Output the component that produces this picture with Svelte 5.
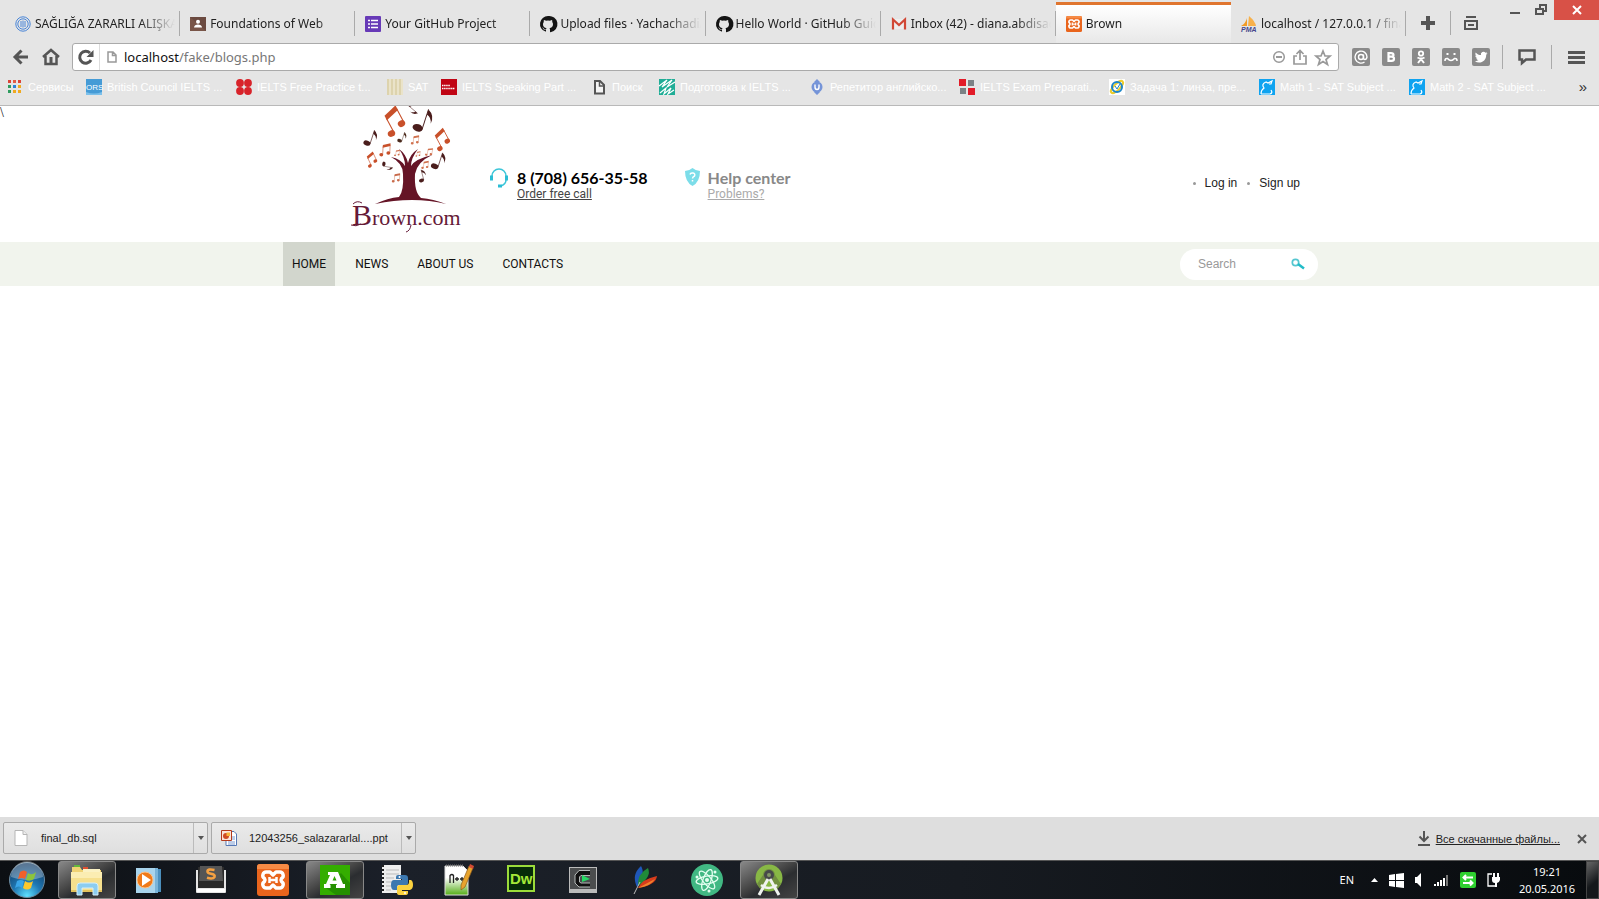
<script>
  const tabs = [
    { icon: 'spiral', title: 'SAĞLIĞA ZARARLI ALIŞKA' },
    { icon: 'class', title: 'Foundations of Web' },
    { icon: 'form', title: 'Your GitHub Project' },
    { icon: 'github', title: 'Upload files · Yachachadi/' },
    { icon: 'github', title: 'Hello World · GitHub Guid' },
    { icon: 'gmail', title: 'Inbox (42) - diana.abdisad' },
    { icon: 'xampp', title: 'Brown', active: true },
    { icon: 'pma', title: 'localhost / 127.0.0.1 / fina' }
  ];
  const bookmarks = [
    { icon: 'apps', title: 'Сервисы', w: 79 },
    { icon: 'ors', title: 'British Council IELTS ...', w: 150 },
    { icon: 'dots', title: 'IELTS Free Practice t...', w: 151 },
    { icon: 'sat', title: 'SAT', w: 54 },
    { icon: 'ielts', title: 'IELTS Speaking Part ...', w: 150 },
    { icon: 'page', title: 'Поиск', w: 68 },
    { icon: 'green', title: 'Подготовка к IELTS ...', w: 150 },
    { icon: 'tutor', title: 'Репетитор английско...', w: 150 },
    { icon: 'blocks', title: 'IELTS Exam Preparati...', w: 150 },
    { icon: 'lens', title: 'Задача 1: линза, пре...', w: 150 },
    { icon: 'khan', title: 'Math 1 - SAT Subject ...', w: 150 },
    { icon: 'khan', title: 'Math 2 - SAT Subject ...', w: 150 }
  ];
  const shares = ['mail', 'vk', 'ok', 'smile', 'twitter'];
  const downloads = [
    { icon: 'blank', name: 'final_db.sql' },
    { icon: 'ppt', name: '12043256_salazararlal....ppt' }
  ];
  const apps = [
    { id: 'explorer', open: true }, { id: 'media' }, { id: 'sublime' }, { id: 'xampp' },
    { id: 'amigo', open: true }, { id: 'python' }, { id: 'notepad' }, { id: 'dw' },
    { id: 'c' }, { id: 'feather' }, { id: 'atom' }, { id: 'android', open: true }
  ];
  const nav = ['Home', 'News', 'About us', 'Contacts'];
  const leaves = [
    { x: 52, y: 16, s: 1.35, r: -28, c: '#c8502a', pair: true },
    { x: 84, y: 16, s: 1.3, r: 18, c: '#4a1d1c' },
    { x: 71, y: 3, s: 0.7, r: 130, c: '#4a1d1c' },
    { x: 100, y: 34, s: 1, r: -28, c: '#c8502a', pair: true },
    { x: 31, y: 33, s: 0.9, r: 18, c: '#4a1d1c' },
    { x: 62, y: 32, s: 0.6, r: 18, c: '#4a2a1c' },
    { x: 74, y: 34, s: 0.5, r: 5, c: '#d0714e', pair: true },
    { x: 44, y: 44, s: 0.7, r: 3, c: '#c8502a', pair: true },
    { x: 30, y: 54, s: 0.7, r: -25, c: '#c8502a', pair: true },
    { x: 88, y: 46, s: 0.45, r: 10, c: '#d0714e', pair: true },
    { x: 56, y: 47, s: 0.35, r: 5, c: '#d0714e', pair: true },
    { x: 77, y: 48, s: 0.3, r: 5, c: '#d0714e', pair: true },
    { x: 84, y: 59, s: 0.45, r: 5, c: '#d0714e', pair: true },
    { x: 99, y: 56, s: 0.95, r: 18, c: '#4a1d1c' },
    { x: 46, y: 61, s: 0.6, r: 100, c: '#4a1d1c' },
    { x: 55, y: 72, s: 0.5, r: 5, c: '#c86a4a', pair: true },
    { x: 82, y: 70, s: 0.65, r: -15, c: '#4a1d1c' }
  ];
  let address = $state('');
</script>

{#snippet xampp()}
  <rect width="32" height="32" rx="3" fill="#e9651d" />
  <path d="M0 3q0-3 3-3h26q3 0 3 3v2H0z" fill="#f58a45" />
  <path d="M9.500 8h3.500l3 3 3-3h3.500a3.500 3.500 0 0 1 2 6.500q-1 1.500 0 3a3.500 3.500 0 0 1-2 6.500H19l-3-3-3 3H9.500a3.500 3.500 0 0 1-2-6.500q1-1.500 0-3a3.500 3.500 0 0 1 2-6.500z" fill="none" stroke="#fff" stroke-width="3.400" stroke-linejoin="round" />
  <path d="M12 16h8M12.500 13v6M19.500 13v6" stroke="#fff" stroke-width="2.500" />
{/snippet}

{#snippet glyph(id)}
  <svg class="fav" viewBox="0 0 16 16" aria-hidden="true">
    {#if id === 'spiral'}
      <g fill="none" stroke="#4a86d8"><circle cx="8" cy="8" r="7.200" /><circle cx="8" cy="8" r="5.200" /><path d="M6 5v6M8 4.500v7M10 5v6" /></g>
    {:else if id === 'class'}
      <rect y="1" width="16" height="14" fill="#795548" /><path d="M0 1h16v14L8 8z" fill="#5d4037" opacity=".5" /><circle cx="8" cy="5.800" r="2" fill="#fff" /><path d="M4 11.500c0-4 8-4 8 0z" fill="#fff" />
    {:else if id === 'form'}
      <rect width="16" height="16" rx="1" fill="#673ab7" /><path d="M3 4.500h2M3 8h2M3 11.500h2M6 4.500h7M6 8h7M6 11.500h7" stroke="#fff" stroke-width="1.700" />
    {:else if id === 'github'}
      <path fill="#141414" d="M8 0a8 8 0 0 0-2.530 15.590c.4.070.55-.17.550-.38v-1.490c-2.010.44-2.530-.86-2.690-1.070-.2-.5-.8-1-1.200-1.100.9-.3 1.500.6 1.900 1.200.5.700 1.200.700 2 .4.080-.5.300-.85.600-1.070C4.700 11.900 3 11.200 3 8.100c0-.9.300-1.600.8-2.100-.1-.5-.2-1.200.1-2.100.8 0 1.500.4 2.100.8a7.600 7.600 0 0 1 4 0c.6-.4 1.300-.8 2.100-.8.3.9.2 1.600.1 2.100.5.500.8 1.200.8 2.100 0 3.100-1.700 3.800-3.600 4 .3.300.6.800.6 1.500v2.200c0 .2.150.46.550.380A8 8 0 0 0 8 0z" />
    {:else if id === 'gmail'}
      <path fill="#eee" d="M1 3h14v10H1z" /><path fill="none" stroke="#d14836" stroke-width="2.200" d="M2 13.500V3.500l6 5.500 6-5.500v10" />
    {:else if id === 'xampp'}
      <g transform="scale(.5)">{@render xampp()}</g>
    {:else if id === 'pma'}
      <path fill="#f39b25" d="M6 2v8H0q5-3 6-8z" /><path fill="#f7b04a" d="M8 0q6 5 7 10H7z" /><text x="0" y="16" class="tiny" fill="#46468c">PMA</text>
    {:else if id === 'apps'}
      {#each [1, 6, 11] as y, r}{#each [1, 6, 11] as x, c}<rect {x} {y} width="3" height="3" fill={['#db4437', '#e25b45', '#db4437', '#2e9c5e', '#2c82d8', '#f0a91f', '#2e9c5e', '#f0a91f', '#f0a91f'][r * 3 + c]} />{/each}{/each}
    {:else if id === 'ors'}
      <rect width="16" height="16" fill="#459bd6" /><path d="M0 13q8 3 16 0v3H0z" fill="#7cc0ea" /><text x="0" y="11" class="ors" fill="#fff">ORS</text>
    {:else if id === 'dots'}
      <g fill="#d8232a"><circle cx="4" cy="4" r="3.900" /><circle cx="12" cy="4" r="3.900" /><circle cx="4" cy="12" r="3.900" /><circle cx="12" cy="12" r="3.900" /></g>
    {:else if id === 'sat'}
      <path fill="#ddd3ad" d="M0 0h16v16H0z" /><path stroke="#eee9d2" stroke-width="1.500" d="M3 0v16M7 0v16M11 0v16M15 0v16" />
    {:else if id === 'ielts'}
      <path fill="#c00414" d="M0 0h16v16H0z" /><path stroke="#fff" stroke-width="1.300" stroke-dasharray="1.500 .6" d="M1 6.500h8M1 9.500h13" />
    {:else if id === 'page'}
      <path fill="#f4f4f4" stroke="#555" stroke-width="2" d="M4 2h5l4 4v8.500H4z" /><path d="M8.500 2v5H13" stroke="#555" stroke-width="1.500" fill="none" />
    {:else if id === 'green'}
      <path fill="#20ad96" d="M0 0h16v16H0z" /><path fill="none" stroke="#fff" stroke-width="1.200" d="m0 7 8-6-5 7 10-7-5 7 8-5M1 14l6-5-2 6 7-6-3 6 6-4" />
    {:else if id === 'tutor'}
      <path fill="#7594d8" d="m8 0 3 3H5zm0 16 3-3H5z" /><circle cx="8" cy="8" r="5.500" fill="#7594d8" /><path fill="none" stroke="#fff" stroke-width="1.400" d="M6 5.500V8q0 2.500 2 2.500T10 8V5.500" />
    {:else if id === 'blocks'}
      <path fill="#e21b28" d="M0 0h7v7H0zM9 9h7v7H9z" /><path fill="#7c8285" d="M9 1h6v6H9zM1 9h6v6H1z" />
    {:else if id === 'lens'}
      <path fill="#fff" d="M0 0h16v16H0z" /><ellipse cx="8" cy="8" rx="8" ry="3" fill="none" stroke="#edcd2c" stroke-width="2" transform="rotate(-45 8 8)" /><circle cx="8" cy="8" r="5" fill="none" stroke="#1b86c9" stroke-width="2" /><path d="m6 7 2 3 3-5" fill="none" stroke="#1b86c9" />
    {:else if id === 'khan'}
      <path fill="#0fa3f0" d="M0 0h16v16H0z" /><path fill="none" stroke="#fff" stroke-width="1.200" d="M2 15q0-4 3-6-3-4 2-6l2 1 4-2-1 3h-2M2 15h9q3-1 1-4" />
    {:else if id === 'blank'}
      <path fill="#fff" stroke="#b5b5b5" d="M2 .5h8l4 4v11H2z" /><path fill="#eee" stroke="#b5b5b5" d="M10 .5v4h4" />
    {:else if id === 'ppt'}
      <path fill="#fff" stroke="#5678b5" d="M5 1.500h8l2.500 2.500v11.500H5z" /><path d="M11 7h3M11 9h3M7 12h7M7 14h7" stroke="#7a9ad0" /><path fill="#fbe4da" stroke="#b43a1c" d="M.5.500h10v10H.5z" /><circle cx="5" cy="6" r="3" fill="#cf4a23" /><path fill="#f7b53c" d="M5.500 2.500h3.500V6H5.500z" />
    {/if}
  </svg>
{/snippet}

{#snippet share(id)}
  <svg width="18" height="18" viewBox="0 0 18 18" aria-hidden="true">
    <rect width="18" height="18" rx="2" fill="#8a8a8a" />
    <g fill="none" stroke="#fff" stroke-width="1.400">
      {#if id === 'mail'}
        <circle cx="9" cy="9" r="2.500" /><path d="M11.500 6.500v3.500q0 1.500 1.500 1.500t2-2.500a6 6 0 1 0-2.500 5" />
      {:else if id === 'vk'}
        <path stroke-width="2.200" d="M6.500 5.100H9q2.500 0 2.500 1.800T9 8.700H6.500m0 0h3q2.500 0 2.500 2.100t-2.500 2.100h-3zm0-4.700v9" />
      {:else if id === 'ok'}
        <circle cx="9" cy="5.500" r="2.200" stroke-width="1.800" /><path stroke-width="2" d="M5.500 9.500q3.500 2 7 0M9 11l-3 4m3-4 3 4" />
      {:else if id === 'smile'}
        <path stroke-width="2" d="M5.500 5v2M12.500 5v2" /><path stroke-width="1.600" d="M3 13q0-3 2.500-2.500 3.500 4 7 0Q15 10 15 13" />
      {:else}
        <path fill="#fff" stroke="none" d="M15.500 5.100c-.5.200-1 .4-1.500.4.500-.300.900-.800 1.100-1.400-.5.300-1 .5-1.600.6a2.600 2.600 0 0 0-4.500 2.400c-2.100-.1-4-1.100-5.300-2.700-.7 1.300-.3 2.700.8 3.500-.4 0-.8-.1-1.200-.3 0 1.300.9 2.400 2.100 2.600l-1.200.1c.3 1 1.300 1.800 2.400 1.800-1.100.9-2.500 1.300-3.900 1.100 5.600 3.500 11.700-.3 11.500-6.500.5-.400 1-.9 1.300-1.600z" />
      {/if}
    </g>
  </svg>
{/snippet}

{#snippet note(n)}
  <g transform="translate({n.x} {n.y}) rotate({n.r}) scale({n.s})" fill={n.c} stroke={n.c}>
    {#if n.pair}
      <ellipse cx="-5" cy="7" rx="2.800" ry="2.400" stroke="none" /><ellipse cx="5" cy="4" rx="2.800" ry="2.400" stroke="none" />
      <path d="M-3 7V-5M7 4V-8" stroke-width=".8" /><path d="M-3.400-7 7.400-10v3.800L-3.400-3.200z" stroke="none" />
    {:else}
      <ellipse cx="-4" cy="6" rx="4" ry="2.800" stroke="none" /><path d="M-.4 6V-10" stroke-width=".7" /><path d="M-.4-10q6 3 5 10-1-5-5-6z" stroke="none" />
    {/if}
  </g>
{/snippet}

{#snippet app(id)}
  <svg width="32" height="32" viewBox="0 0 32 32" aria-hidden="true">
    {#if id === 'explorer'}
      <path fill="#f0d273" d="M1 3h8l2 3h19v21H1z" /><path fill="#65b83c" d="M3 1h6v2H3z" /><path fill="#e05030" d="M12 3h5v2h-5z" /><path fill="#4ba3e0" d="M20 6h6v2h-6z" /><path fill="#fbf2c4" d="M12 5h17v5H12z" /><path fill="#f6e08e" d="M0 8h31v20H0z" /><path fill="#fbedb2" d="M0 8h31v6H0z" /><path fill="#e4c25c" d="M0 26h31v2H0z" /><path fill="#8ccdf0" stroke="#d4effb" d="M6 31V22q0-3 3-3h15q3 0 3 3v9h-5v-7H11v7z" />
    {:else if id === 'media'}
      <path fill="#4b8fbd" d="M10 5h18v23H10z" /><path fill="#79b4d9" d="M7 4h18v25H7z" /><path fill="#a9d4ec" d="M3 4h19v25H3z" /><circle cx="12" cy="16" r="8" fill="#f07a18" stroke="#fbc38c" /><path fill="#fff" d="m9 10 9 6-9 6z" />
    {:else if id === 'sublime'}
      <path fill="#e5e5e5" d="M1 6h30v22q0 1-1 1H2q-1 0-1-1z" /><path fill="#fff" d="M2 25h28v3H2z" /><path fill="#292929" d="M3 3h26v21H3z" /><path fill="#555" d="M5 2h22l1 15H4z" /><path fill="none" stroke="#f5a142" stroke-width="2.600" d="M19.500 6q-7-1.500-7 1.500 0 1.500 3.500 2.200 4.500.8 3.500 3.300-1.500 2.500-7.500.8" />
    {:else if id === 'xampp'}
      {@render xampp()}
    {:else if id === 'amigo'}
      <path fill="#34ad00" d="M1 1h30v30H1z" /><path fill="#259000" d="m22 9 9 10v12H17L7 24z" /><path fill="#fff" fill-rule="evenodd" d="M9 8h10l5 12h2v4h-9v-3h1l-.5-1h-6l-1 1h1v3H5v-4h2l4-9H9zm6.500 4-2 4.500h4z" />
    {:else if id === 'python'}
      <path fill="#eee" d="M1 1h19v28H1z" /><path stroke="#222" stroke-width="2" stroke-dasharray="2 2" d="M2 1v28" /><path stroke="#bbb" d="M5 6h13M5 10h13M5 14h8M5 18h6M5 22h5M5 26h5" /><path fill="#3c78b0" d="M17 11h7q3 0 3 3v5q0 2-3 2h-6q-2 0-2 3v2h-3q-3 0-3-5t3-5h8v-1h-6v-2q0-2 2-2z" /><path fill="#fbd23f" d="M28 16h2q2 1 2 5t-3 5h-8v1h6v2q0 2-3 2h-5q-3 0-3-2v-5q0-3 3-3h6q3 0 3-3z" /><circle cx="18.500" cy="13" r="1" fill="#fff" /><circle cx="24" cy="29" r="1" fill="#fff" />
    {:else if id === 'notepad'}
      <defs><linearGradient id="npp" x2="0" y2="1"><stop offset=".4" stop-color="#fff" /><stop offset="1" stop-color="#54ad16" /></linearGradient></defs>
      <path fill="url(#npp)" stroke="#ddd" d="M2 2h18l5 5v24H2z" /><path stroke="#777" stroke-dasharray="1 1" stroke-width="2" d="M3 1.500h18" /><path fill="none" stroke="#222" stroke-width="1.300" d="M7 19v-7.500q2-2 3.500 0V19M12 15h4M14 13v4M17 15h4M19 13v4" /><path fill="#e7a32d" stroke="#8c5b1c" stroke-width=".7" d="m26 2 4 2-8 19-4 3v-5z" /><path fill="#d24b33" d="m27 0 4 2-1 3-4-2z" />
    {:else if id === 'dw'}
      <path fill="#072b09" stroke="#9bdc3a" stroke-width="2" d="M3 2h26v25H3z" /><text x="5" y="20" class="dw" fill="#a5e838">Dw</text>
    {:else if id === 'c'}
      <path fill="#bbb" d="M2 3h28v26H2z" /><path fill="#4b4d4e" d="M3 4h26v21H3z" /><path fill="none" stroke="#111" stroke-width="4" d="M23 9H13l-3 3v6l3 3h10" /><path fill="none" stroke="#b4b9b7" d="M23 6.500H12L8 11v8l4 4h11M23 11.500h-9L12.500 13v5l1.500 1h9" /><path fill="#26d863" d="m15 11 8 4-8 3z" />
    {:else if id === 'feather'}
      <path fill="#1f57b8" d="M8 23Q2 11 12 2q5 8-4 21z" /><path fill="#208a39" d="M9 22Q8 10 19 4q4 9-10 18z" /><path fill="#d83c1c" d="M9 24q4-9 19-12-1 9-19 12z" /><path fill="#f0852d" d="m9 24 17-9q-4 7-17 9z" /><path stroke="#bbb" d="m5 30 6-12" />
    {:else if id === 'atom'}
      <circle cx="16" cy="16" r="16" fill="#41b883" /><g fill="none" stroke="#e5fff1" stroke-width="1.300"><ellipse cx="16" cy="16" rx="4" ry="11" transform="rotate(20 16 16)" /><ellipse cx="16" cy="16" rx="4" ry="11" transform="rotate(80 16 16)" /><ellipse cx="16" cy="16" rx="4" ry="11" transform="rotate(-40 16 16)" /></g><circle cx="16" cy="16" r="2" fill="#e5fff1" /><circle cx="6" cy="13" r="1.500" fill="#e5fff1" /><circle cx="24" cy="8" r="1.500" fill="#e5fff1" /><circle cx="18" cy="27" r="1.500" fill="#e5fff1" />
    {:else}
      <circle cx="16" cy="14" r="13.500" fill="#88b845" /><path fill="#718f40" d="M16 5a6 6 0 0 1 6 6l6 9-4 5-8-9-8 9-4-5 6-9a6 6 0 0 1 6-6z" /><circle cx="16" cy="11" r="5" fill="#47494a" /><circle cx="16" cy="11" r="2" fill="#819766" /><path fill="none" stroke="#f0f3ef" stroke-width="3" d="m15 15-9 16M17 15l9 16" /><path fill="none" stroke="#f0f3ef" stroke-width="2.500" d="M8 21q8 6 16 0" />
    {/if}
  </svg>
{/snippet}

<div class="screen">
  <header class="chrome">
    <div class="tabstrip">
      <div class="tabs">
        {#each tabs as t}
          <button class="tab" class:active={t.active}>{@render glyph(t.icon)}<span>{t.title}</span></button>
        {/each}
      </div>
      <button class="tool" aria-label="New tab"><svg width="14" height="14" viewBox="0 0 14 14"><path d="M7 0v14M0 7h14" stroke="#555" stroke-width="4" /></svg></button>
      <button class="tool last" aria-label="Closed tabs"><svg width="14" height="14" viewBox="0 0 14 14"><path fill="none" stroke="#555" stroke-width="2" d="M2 1h10M0 5h14M1 5v8h12V5" /><path d="M4 9h6" stroke="#555" stroke-width="2" /></svg></button>
      <div class="winctl">
        <button class="min" aria-label="Minimize"><svg width="10" height="12" viewBox="0 0 10 12"><path d="M0 9h10" stroke="#555" stroke-width="2" /></svg></button>
        <button aria-label="Restore"><svg width="12" height="12" viewBox="0 0 12 12"><path fill="none" stroke="#555" stroke-width="2" d="M1 5h7v5H1zM5 4V1h6v6H9" /></svg></button>
        <button class="close" aria-label="Close"><svg width="10" height="10" viewBox="0 0 10 10"><path d="m1 1 8 8M9 1 1 9" stroke="#fff" stroke-width="2" /></svg></button>
      </div>
    </div>
    <div class="toolbar">
      <button class="back" aria-label="Back"><svg width="16" height="16" viewBox="0 0 16 16"><path fill="none" stroke="#555" stroke-width="3" d="M15 8H2M8.500 1.500 2 8l6.500 6.500" /></svg></button>
      <button class="home" aria-label="Home page"><svg width="18" height="18" viewBox="0 0 18 18"><path fill="none" stroke="#555" stroke-width="2.500" d="m1 9 8-7 8 7M3.500 8v8h11V8" /><path d="M9 9v7" stroke="#555" stroke-width="3" /></svg></button>
      <div class="omnibox">
        <button class="reload" aria-label="Reload"><svg width="16" height="16" viewBox="0 0 16 16"><path fill="none" stroke="#555" stroke-width="3" d="M13 11a6 6 0 1 1-1-7" /><path fill="#555" d="M15.500 1v7h-7z" /></svg></button>
        <svg width="10" height="12" viewBox="0 0 10 12" aria-hidden="true"><path fill="none" stroke="#999" stroke-width="1.500" d="M1 1h5l3 3v7H1zM5.500 1v3.500H9" /></svg>
        <label class="url"><span>localhost<i>/fake/blogs.php</i></span><input aria-label="Address" bind:value={address} /></label>
        <svg width="14" height="14" viewBox="0 0 14 14" aria-hidden="true"><g fill="none" stroke="#999" stroke-width="1.500"><circle cx="7" cy="7" r="5.300" /><path d="M4 7h6" stroke-width="2" /></g></svg>
        <svg width="14" height="16" viewBox="0 0 14 16" aria-hidden="true"><path fill="none" stroke="#999" stroke-width="1.700" d="M4 7H1v8h12V7h-3M7 11V2M3.500 5 7 1.500 10.500 5" /></svg>
        <svg width="18" height="17" viewBox="0 0 18 17" aria-hidden="true"><path fill="none" stroke="#999" stroke-width="1.700" d="m9 2 2 5h5l-4 3.500 1.500 5L9 12.500l-4.500 3 1.500-5L2 7h5z" /></svg>
      </div>
      <div class="shares">{#each shares as s}<button aria-label={s}>{@render share(s)}</button>{/each}</div>
      <button class="tool chat" aria-label="Messages"><svg width="18" height="16" viewBox="0 0 18 16"><path fill="none" stroke="#555" stroke-width="2.500" d="M1.500 1.500h15v9H8l-4 3.500v-3.500H1.500z" /></svg></button>
      <button class="menu" aria-label="Menu"><svg width="17" height="13" viewBox="0 0 17 13"><path stroke="#555" stroke-width="3" d="M0 1.500h17M0 6.500h17M0 11.500h17" /></svg></button>
    </div>
    <nav class="bookmarks" aria-label="Bookmarks">
      {#each bookmarks as b}
        <a href="#top" style:width="{b.w}px">{@render glyph(b.icon)}<span>{b.title}</span></a>
      {/each}
      <button aria-label="More bookmarks">»</button>
    </nav>
  </header>

  <main>
    <div class="stray">\</div>
    <div class="masthead">
      <svg class="logo" width="130" height="130" viewBox="0 0 130 130" role="img" aria-label="Brown.com">
        {#each leaves as n}{@render note(n)}{/each}
        <path fill="#651426" d="M34 98q13-6 24-7 5-6 4-23 0-11-12-17 10 2 14 9 0-9-6-17 7 5 9 14 2-9 10-14-7 9-7 17 4-7 21-11-15 7-17 19-1 18 6 24 12 1 25 6-16-4-34-4t-37 4z" />
        <text x="11" y="119" class="brand"><tspan class="cap">B</tspan>rown.com</text>
        <path fill="none" stroke="#651a38" d="M10 119q5 2 10-1M12 98q4-4 9-1M70 119q-1 6-5 7" />
      </svg>
      <div class="contact">
        <svg width="20" height="20" viewBox="0 0 20 20" aria-hidden="true"><path fill="none" stroke="#3cc6d9" stroke-width="1.500" d="M3 8a7 7 0 0 1 14 0v4q0 4-5 6" /><path fill="none" stroke="#2bbdd4" stroke-width="3" d="M2.500 7.500v5M17.500 7.500v5M9 18h4" /></svg>
        <div><strong>8 (708) 656-35-58</strong><a href="#call">Order free call</a></div>
      </div>
      <div class="contact help">
        <svg width="15" height="18" viewBox="0 0 15 18" aria-hidden="true"><path fill="#7cdde9" d="M7.500 0Q11 3 15 3q0 11-7.500 15Q0 14 0 3q4 0 7.500-3z" /><path fill="none" stroke="#fff" stroke-width="1.500" d="M5 6.500Q5.500 4.500 8 5t1.500 3q-2 1-2 2.500M7.500 12v1.500" /></svg>
        <div><strong>Help center</strong><a href="#help">Problems?</a></div>
      </div>
      <ul><li><a href="#login">Log in</a></li><li><a href="#signup">Sign up</a></li></ul>
    </div>
    <div class="navband">
      <nav class="sitenav">
        {#each nav as n, i}<a href="#{n}" class:current={i === 0}>{n}</a>{/each}
        <form class="search">
          <input aria-label="Search" placeholder="Search" />
          <button type="button" aria-label="Find"><svg width="14" height="12" viewBox="0 0 14 12"><circle cx="4.500" cy="4.500" r="3.200" fill="none" stroke="#55c6d0" stroke-width="1.700" /><path stroke="#22bcc8" stroke-width="2.500" d="m7 6 6 4.500" /></svg></button>
        </form>
      </nav>
    </div>
  </main>

  <section class="shelf" aria-label="Downloads">
    {#each downloads as d}
      <div class="item"><button class="file">{@render glyph(d.icon)}<span>{d.name}</span></button><button class="drop" aria-label="Options"><svg width="6" height="4" viewBox="0 0 6 4"><path fill="#555" d="M0 0h6L3 4z" /></svg></button></div>
    {/each}
    <a class="all" href="#all"><svg width="12" height="15" viewBox="0 0 12 15" aria-hidden="true"><path fill="none" stroke="#555" stroke-width="2" d="M6 0v10M1.500 5.500 6 10l4.500-4.500M0 14h12" /></svg><span>Все скачанные файлы...</span></a>
    <button class="x" aria-label="Close downloads"><svg width="10" height="10" viewBox="0 0 10 10"><path d="m1 1 8 8M9 1 1 9" stroke="#555" stroke-width="2" /></svg></button>
  </section>

  <footer class="taskbar">
    <button class="start" aria-label="Start">
      <svg width="38" height="38" viewBox="0 0 38 38">
        <defs><radialGradient id="orb" cx=".5" cy=".95" r=".9"><stop stop-color="#5fe0ff" /><stop offset=".45" stop-color="#1f78b4" /><stop offset="1" stop-color="#123c66" /></radialGradient></defs>
        <circle cx="19" cy="19" r="17.500" fill="url(#orb)" stroke="#6d8ba0" /><path fill="#fff" opacity=".3" d="M3 16a16 16 0 0 1 32 0q-16 6-32 0z" />
        <path fill="#f0602a" d="M12 11q4-3 7 0l-2 7q-3-2-7 0z" /><path fill="#8cc43c" d="M20 12q4 3 8-1l-2 7q-4 3-8 1z" /><path fill="#39a5e8" d="M9 20q4-2 7 0l-2 7q-3-3-7 0z" /><path fill="#fcc82c" d="M17 20q4 3 8 0l-2 7q-4 3-8 0z" />
      </svg>
    </button>
    {#each apps as a}<button class="app" class:open={a.open} aria-label={a.id}>{@render app(a.id)}</button>{/each}
    <div class="tray">
      <span class="lang">EN</span>
      <svg width="7" height="4" viewBox="0 0 7 4" aria-hidden="true"><path fill="#fff" d="M0 4h7L3.500 0z" /></svg>
      <svg width="15" height="15" viewBox="0 0 15 15" aria-hidden="true"><path fill="#fff" d="m0 2 6-1v6H0zm7-1 8-1v7H7zM0 8h6v6l-6-1zm7 0h8v7l-8-1z" /></svg>
      <svg width="8" height="14" viewBox="0 0 8 14" aria-hidden="true"><path fill="#fff" d="M0 4h2l4-4v14l-4-4H0z" /></svg>
      <svg width="15" height="11" viewBox="0 0 15 11" aria-hidden="true"><path fill="#fff" d="M0 9h2v2H0zm3-2h2v4H3zm3-2h2v6H6zm3-2h2v8H9z" /><path fill="#777" d="M12 0h2v11h-2z" /></svg>
      <svg width="16" height="16" viewBox="0 0 16 16" aria-hidden="true"><rect width="16" height="16" rx="2" fill="#2fd02f" /><path fill="none" stroke="#fff" stroke-width="2" d="M13 5.500H4M6 3 3.500 5.500 6 8M3 11h9M10 8.500l2.500 2.500-2.500 2.500" /></svg>
      <svg width="14" height="16" viewBox="0 0 14 16" aria-hidden="true"><path fill="none" stroke="#fff" stroke-width="1.300" d="M5 2H1v12h8v-2" /><path fill="#fff" d="M5 5h8v3q-1 3-3 3v4H8v-4Q5 11 5 8zM6 1h2v4H6zm4 0h2v4h-2z" /></svg>
      <time>19:21<br />20.05.2016</time>
    </div>
    <button class="peek" aria-label="Show desktop"></button>
  </footer>
</div>

<style>
  :global(body) { margin: 0; background: #fff; }
  .screen { display: flex; flex-direction: column; min-height: 100vh; font: 12px/16px "Noto Sans", sans-serif; color: #222; }
  svg { display: block; flex: none; overflow: visible; }
  button { padding: 0; border: 0; background: none; font: inherit; color: inherit; display: flex; align-items: center; justify-content: center; flex: none; }
  a { color: inherit; text-decoration: none; }
  .fav { width: 16px; height: 16px; }
  .tiny { font: italic bold 7px "Liberation Sans", sans-serif; }
  .ors { font: 8px "Liberation Sans", sans-serif; }
  .dw { font: bold 15px "Liberation Sans", sans-serif; }

  .chrome { background: #e5e5e5; border-bottom: 1px solid #b9b9b9; }
  .tabstrip { display: flex; height: 43px; align-items: flex-start; }
  .tabs { display: flex; flex: 1; padding: 2px 0 0 5px; }
  .tab { flex: 0 1 176px; min-width: 0; height: 41px; gap: 4px; padding: 0 5px 0 10px; justify-content: flex-start; border-top: 3px solid transparent; box-sizing: border-box; background: linear-gradient(#aaa, #aaa) right 6px / 1px 25px no-repeat; }
  .tab span { flex: 1; overflow: hidden; white-space: nowrap; text-align: left; mask-image: linear-gradient(90deg, #000 75%, transparent 100%); }
  .tab.active { border-top-color: #e0752f; background: linear-gradient(#fff, #e8e8e8); }
  .tool { width: 45px; height: 24px; margin-top: 11px; border-right: 1px solid #aaa; box-sizing: border-box; }
  .tool.last { border: 0; width: 39px; }
  .winctl { display: flex; margin-left: 12px; }
  .winctl button { width: 26px; height: 20px; }
  .winctl .close { width: 45px; background: #d85147; }
  .toolbar { display: flex; align-items: center; height: 28px; padding: 0 14px 0 13px; }
  .home { margin: 0 12px 0 13px; }
  .omnibox { flex: 1; display: flex; align-items: center; gap: 7px; height: 28px; padding-right: 6px; background: #fff; border: 1px solid #aaa; border-radius: 3px; box-sizing: border-box; }
  .reload { width: 27px; height: 26px; border-right: 1px solid #ddd; }
  .url { position: relative; flex: 1; font-size: 13px; line-height: 20px; color: #111; }
  .url i { font-style: normal; color: #777; }
  .url input { position: absolute; inset: 0; width: 100%; border: 0; padding: 0; background: none; outline: 0; }
  .shares { display: flex; gap: 12px; margin-left: 13px; }
  .tool.chat { width: 50px; margin: 0 16px 0 12px; border-left: 1px solid #aaa; }
  .bookmarks { display: flex; align-items: center; height: 32px; padding: 0 12px 2px 7px; color: #fff; font: 11px/16px "Liberation Sans", sans-serif; }
  .bookmarks a { display: flex; align-items: center; gap: 5px; flex: 0 1 auto; min-width: 0; }
  .bookmarks a span { white-space: nowrap; }
  .bookmarks button { margin-left: auto; color: #333; font-size: 15px; }

  main { position: relative; flex: 1; font-family: Roboto, sans-serif; }
  .stray { position: absolute; left: 0; top: 0; font: 14px/14px "Liberation Serif", serif; }
  .masthead { display: flex; align-items: flex-start; width: 1037px; max-width: 100%; margin: 0 auto; padding-left: 2px; box-sizing: border-box; height: 136px; }
  .logo { margin-left: 58px; overflow: hidden; }
  .contact { display: flex; gap: 8px; margin: 62px 0 0 18px; color: #444; }
  .contact div { display: flex; flex-direction: column; align-items: flex-start; padding-top: 1px; }
  .contact strong { font: bold 16px/18px Lato, sans-serif; color: #000; }
  .contact a { font-size: 12px; line-height: 14px; text-decoration: underline; }
  .contact.help { margin-left: 37px; color: #aaa; }
  .contact.help strong { color: #888; }
  ul { display: flex; gap: 22px; margin: 69px 18px 0 auto; padding: 0; list-style: none; line-height: 16px; }
  li { display: flex; align-items: center; gap: 9px; margin-left: -12px; font: 12px/16px "Liberation Sans", sans-serif; }
  li::before { content: ""; width: 3px; height: 3px; border-radius: 2px; background: #999; }
  .brand { font: 22px "Liberation Serif", serif; fill: #651a38; }
  .cap { font-size: 30px; }
  .navband { background: #f1f4ed; }
  .sitenav { display: flex; width: 1037px; max-width: 100%; height: 44px; margin: 0 auto; padding-left: 2px; box-sizing: border-box; align-items: center; font-size: 12px; text-transform: uppercase; color: #111; }
  .sitenav > a { height: 44px; line-height: 44px; padding: 0 9px; margin-right: 11px; }
  .sitenav .current { background: #d2d6cd; }
  .search { display: flex; align-items: center; width: 138px; height: 31px; margin-left: auto; padding: 0 13px 0 18px; box-sizing: border-box; background: #fff; border-radius: 16px; }
  .search input { flex: 1; min-width: 0; border: 0; padding: 0; outline: 0; background: none; font: 12px "Liberation Sans", sans-serif; }
  .search input::placeholder { color: #999; }

  .shelf { display: flex; align-items: center; gap: 3px; height: 43px; padding: 0 12px 0 3px; background: #dedede; font: 11px/16px "Liberation Sans", sans-serif; }
  .item { display: flex; width: 205px; height: 32px; margin-bottom: 2px; box-sizing: border-box; border: 1px solid #aaa; border-radius: 2px; background: linear-gradient(#eaeaea, #dfdfdf); }
  .file { flex: 1; justify-content: flex-start; gap: 12px; padding-left: 9px; }
  .drop { width: 14px; border-left: 1px solid #bbb; }
  .all { display: flex; align-items: center; gap: 6px; margin-left: auto; }
  .all span { text-decoration: underline; }
  .x { margin-left: 14px; }

  .taskbar { display: flex; height: 39px; box-sizing: border-box; border-top: 1px solid #555; background: linear-gradient(90deg, #0c0f13, #1b2029 25%, #171b21 60%, #080b0e); color: #fff; }
  .start { width: 54px; }
  .app { width: 58px; margin-left: 4px; box-sizing: border-box; border: 1px solid transparent; border-radius: 3px; }
  .app.open { border-color: #888; background: linear-gradient(150deg, #888, #444 45%, #2b2d30 60%, #444); }
  .tray { display: flex; align-items: center; gap: 11px; margin-left: auto; padding-right: 7px; font-size: 11px; }
  .lang { margin-right: 6px; }
  time { width: 64px; margin-left: 3px; text-align: center; line-height: 17px; }
  .peek { width: 13px; border: 1px solid #444; background: linear-gradient(140deg, #666, #15181b 60%); }
</style>
